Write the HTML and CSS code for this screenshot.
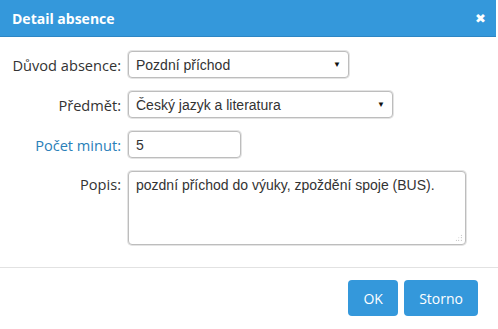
FILE: index.html
```html
<!DOCTYPE html>
<html lang="cs">
<head>
  <meta charset="UTF-8">
  <title>Detail absence</title>
  <link rel="stylesheet" href="styles.css">
</head>
<body>

  <div class="dialog">
    <div class="dialog-head">
      <h2>Detail absence</h2>
      <span class="close">&#x2716;</span>
    </div>

    <div class="dialog-body">
      <label>Důvod absence:</label>
      <div class="select sel-duvod"><span>Pozdní příchod</span><i class="arrow">&#9660;</i></div>

      <label>Předmět:</label>
      <div class="select sel-predmet"><span>Český jazyk a literatura</span><i class="arrow">&#9660;</i></div>

      <label class="link">Počet minut:</label>
      <input type="text" class="field minuty" value="5">

      <label class="top">Popis:</label>
      <div class="popis-wrap">
        <textarea class="field popis">pozdní příchod do výuky, zpoždění spoje (BUS).</textarea>
        <span class="grip"></span>
      </div>
    </div>

    <div class="dialog-foot">
      <button class="btn btn-ok">OK</button>
      <button class="btn">Storno</button>
    </div>
  </div>

</body>
</html>
```

FILE: styles.css
```css
body { margin: 0; background: #fff; font-family: "Open Sans", Arial, sans-serif; color: #333; }
.dialog { width: 498px; height: 329px; display: flex; flex-direction: column; }
.dialog-head { height: 36px; background: #3498db; border-bottom: 1px solid #2d86c4; display: flex; align-items: center; justify-content: space-between; padding: 0 10px 0 12px; margin-right: 2px; }
.dialog-head h2 { margin: 0; font-size: 14px; font-weight: 700; color: #fff; }
.close { color: #fff; font-size: 13px; font-weight: bold; font-family: "DejaVu Sans", sans-serif; }
.dialog-body { display: grid; grid-template-columns: 121px auto; column-gap: 7px; row-gap: 13px; align-items: center; justify-items: start; padding: 14px 0 22px 0; }
label { justify-self: end; font-size: 14.6px; color: #333; }
label.link { color: #2a80b9; }
label.top { align-self: start; margin-top: 3px; }
.select, .field { box-sizing: border-box; height: 27px; border: 1px solid #bdbdbd; border-radius: 4px; box-shadow: 0 0 0 1px #e4e4e4; font-family: "Liberation Sans", Arial, sans-serif; font-size: 14px; color: #333; background: #fff; }
.select { display: flex; align-items: center; justify-content: space-between; padding: 0 7px; }
.arrow { font-style: normal; font-size: 8px; color: #111; }
.sel-duvod { width: 221px; }
.sel-predmet { width: 265px; }
.field { padding: 0 7px; outline: none; }
.minuty { width: 113px; }
.popis-wrap { position: relative; }
.popis { display: block; width: 338px; height: 74px; padding: 5px 7px; resize: none; line-height: 16px; }
.grip { position: absolute; right: 4px; bottom: 4px; width: 7px; height: 7px; background: radial-gradient(circle, #999 0.7px, transparent 0.8px) 0 0 / 2.5px 2.5px; clip-path: polygon(100% 0, 100% 100%, 0 100%); }
.dialog-foot { border-top: 1px solid #e2e2e2; display: flex; justify-content: flex-end; gap: 6px; padding: 12px 20px 0 0; }
.btn { height: 36px; border: none; border-radius: 4px; background: #3498db; color: #fff; font-family: "Open Sans", Arial, sans-serif; font-size: 14px; padding: 0 15px; }
.btn-ok { width: 50px; }
```
